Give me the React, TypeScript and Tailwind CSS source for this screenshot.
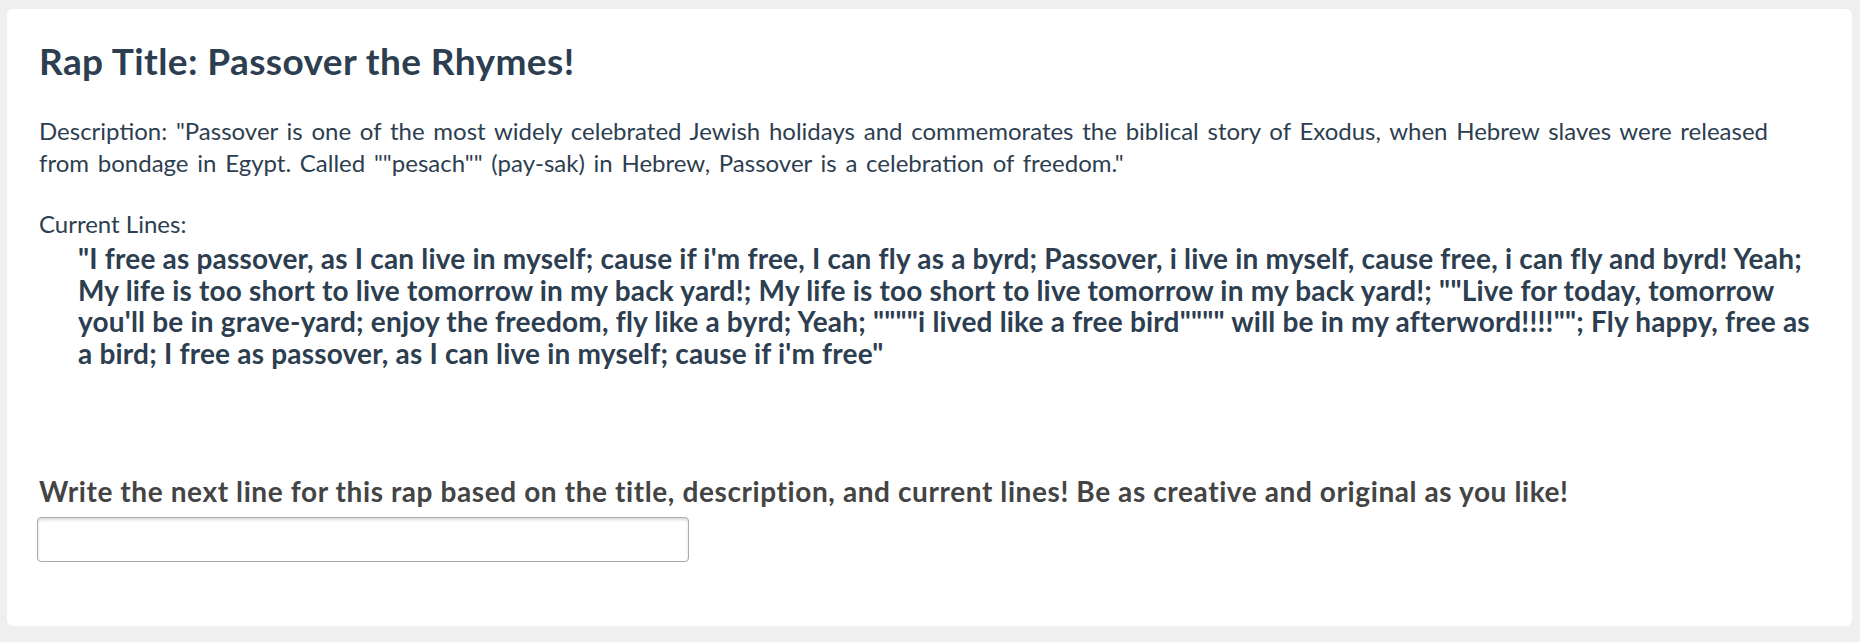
import React from "react";

export default function App() {
  return (
    <div className="min-h-[642px] w-full bg-[#efefef] pt-[9px] pl-[7px] pr-[8px] pb-[16px] font-['Lato','Open_Sans',sans-serif]">
      <div className="bg-white rounded-[6px] px-[32px] pt-[32px] pb-[64px] text-[#2c3e50]">
        <h2 className="text-[37px] leading-[40px] tracking-[0.4px] font-bold m-0">Rap Title: Passover the Rhymes!</h2>
        <p className="mt-[34px] text-[24px] leading-[32px] [word-spacing:2.6px] m-0">
          Description: "Passover is one of the most widely celebrated Jewish holidays and commemorates the biblical story of Exodus, when Hebrew slaves were released from bondage in Egypt. Called ""pesach"" (pay-sak) in Hebrew, Passover is a celebration of freedom."
        </p>
        <p className="mt-[29px] text-[24px] leading-[32px]">Current Lines:</p>
        <p className="mt-[3px] pl-[39px] text-[28px] leading-[31.7px] tracking-[0.2px] font-bold">
          "I free as passover, as I can live in myself; cause if i'm free, I can fly as a byrd; Passover, i live in myself, cause free, i can fly and byrd! Yeah; My life is too short to live tomorrow in my back yard!; My life is too short to live tomorrow in my back yard!; ""Live for today, tomorrow you'll be in grave-yard; enjoy the freedom, fly like a byrd; Yeah; """"i lived like a free bird"""" will be in my afterword!!!!""; Fly happy, free as a bird; I free as passover, as I can live in myself; cause if i'm free"
        </p>
        <p className="mt-[106px] text-[28px] leading-[31.7px] tracking-[0.6px] font-bold text-[#444444]">
          Write the next line for this rap based on the title, description, and current lines! Be as creative and original as you like!
        </p>
        <input
          type="text"
          className="mt-[9px] block w-[652px] h-[45px] ml-[-2px] rounded-[4px] border border-[#a9a9a9] bg-white shadow-[inset_0_2px_3px_rgba(0,0,0,0.15)] outline-none"
        />
      </div>
    </div>
  );
}
